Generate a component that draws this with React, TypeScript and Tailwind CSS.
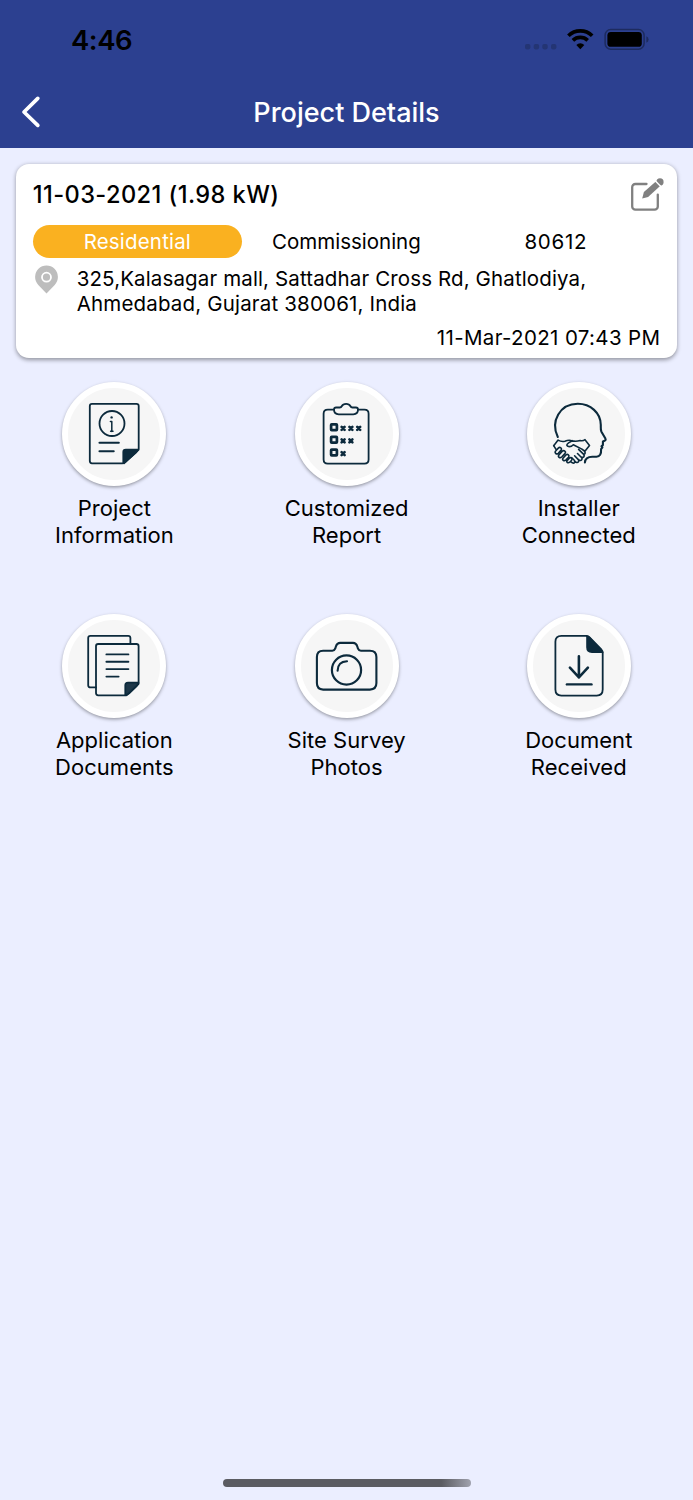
import type { ReactNode } from "react";

const INK = "#0c2a3c";

function StatusBar() {
  return (
    <div className="flex h-[80px] items-start justify-between pl-[71px] pr-[44px]">
      <span className="mt-[22px] text-[27.5px] leading-[36px] font-semibold tracking-[-0.45px] text-black">4:46</span>
      <svg className="mt-[26px]" width="126" height="28" viewBox="523 26 126 28">
        <g fill="#243574">
          <rect x="525" y="44" width="5.4" height="5.4" rx="1.8" />
          <rect x="533.7" y="44" width="5.4" height="5.4" rx="1.8" />
          <rect x="542.3" y="44" width="5.4" height="5.4" rx="1.8" />
          <rect x="551" y="44" width="5.4" height="5.4" rx="1.8" />
        </g>
        <g fill="none" stroke="#000" strokeWidth="3.7">
          <path d="M568.4 35.7a17 17 0 0 1 23.8 0" />
          <path d="M572.9 40.4a10.7 10.7 0 0 1 14.8 0" />
        </g>
        <path d="M576.3 44.9a5.9 5.9 0 0 1 8 0l-4 4.4z" fill="#000" />
        <rect x="605.1" y="29.6" width="39" height="19.6" rx="5.6" fill="none" stroke="#1d2b5f" strokeWidth="1.5" />
        <rect x="607.4" y="32" width="34.4" height="14.8" rx="3.4" fill="#000" />
        <path d="M646.4 36.2q2.2 1 2.2 3.3t-2.2 3.3z" fill="#1d2b5f" />
      </svg>
    </div>
  );
}

function Header() {
  return (
    <header className="h-[147.5px] bg-[#2c4090]">
      <StatusBar />
      <div className="grid h-[64px] grid-cols-[60px_1fr_60px] items-center">
        <svg className="ml-[20px]" width="22" height="34" viewBox="0 0 22 34">
          <path d="M17.8 3.4 4 17l13.8 13.4" fill="none" stroke="#fff" strokeWidth="3.7" strokeLinecap="round" strokeLinejoin="round" />
        </svg>
        <h1 className="pt-[2px] text-center text-[27px] leading-[34px] font-medium whitespace-nowrap text-white">Project Details</h1>
      </div>
    </header>
  );
}

function ProjectCard() {
  return (
    <section className="mx-[16.3px] mt-[16.5px] h-[194px] rounded-[13px] bg-white pt-[15.6px] pr-[16.3px] pl-[16.4px] shadow-[0_1.5px_4px_rgba(0,0,0,0.38)]">
      <div className="flex h-[45.6px] justify-between">
        <h2 className="pt-[0.6px] text-[23.6px] leading-[30px] font-medium tracking-[0.43px] whitespace-nowrap text-black">11-03-2021 (1.98 kW)</h2>
        <svg className="-mt-[1px] -mr-[4px] overflow-visible" width="35" height="35" viewBox="0 0 35 35">
          <path d="M17.5 5H6.4a3.2 3.2 0 0 0-3.2 3.2v19.2a3.2 3.2 0 0 0 3.2 3.2h19.2a3.2 3.2 0 0 0 3.2-3.2V15.6" fill="none" stroke="#808080" strokeWidth="2.3" strokeLinecap="round" />
          <path d="m13.2 19.4 1.7-6.3L26.8 2.5l4.3 4.5-12 11z" fill="#808080" />
          <circle cx="31" cy="2.9" r="3.6" fill="#808080" />
          <path d="m26.2 1.8 5.9 6" stroke="#fff" strokeWidth="1.4" />
        </svg>
      </div>
      <div className="flex h-[32.5px] text-[20.5px] leading-[33.6px] text-black">
        <span className="w-[209.3px] rounded-full bg-[#fab120] text-center tracking-[0.18px] text-white">Residential</span>
        <span className="ml-[30px] w-[252.5px] whitespace-nowrap">Commissioning</span>
        <span className="tracking-[0.7px]">80612</span>
      </div>
      <div className="mt-[8.6px] flex h-[50px] text-black">
        <svg className="ml-[2px] overflow-visible" width="24" height="28" viewBox="0 0 24 28">
          <path d="M11.5 27.5 3.3 18.9A11.4 11.4 0 1 1 19.7 18.9z" fill="#bdbdbd" />
          <circle cx="11.5" cy="11.2" r="4.5" fill="none" stroke="#fff" strokeWidth="1.8" />
        </svg>
        <p className="ml-[18px] text-[20.5px] leading-[25px] tracking-[0.13px] whitespace-nowrap">
          325,Kalasagar mall, Sattadhar Cross Rd, Ghatlodiya,
          <br />
          <span className="tracking-[0.17px]">Ahmedabad, Gujarat 380061, India</span>
        </p>
      </div>
      <p className="mt-[8.4px] text-right text-[20.5px] leading-[25px] tracking-[0.36px] text-black">11-Mar-2021 07:43 PM</p>
    </section>
  );
}

const informationIcon = (
  <>
    <path d="M60.5 81.3H30q-2.2 0-2.2-2.2V24q0-2.2 2.2-2.2h44.5q2.2 0 2.2 2.2v43.5L62 81.3" />
    <path d="M60.4 81.8V70q0-3.2 3.4-3.2h13q0 2.2-2 4.2L64 80.6q-1.6 1.4-3.6 1.2z" fill={INK} stroke="none" />
    <circle cx="50" cy="41.5" r="12.5" />
    <path d="M48.4 39.6h1.4v9.8M48.6 49.3h2.4" strokeWidth="1.5" />
    <circle cx="49.6" cy="35.4" r="1.2" fill={INK} stroke="none" />
    <path d="M37.5 60.8h19.3M37.5 69.2h14.2" strokeWidth="2.1" />
  </>
);

const reportRows = [
  { y: 45.2, marks: [48.7, 56.5, 64.3] },
  { y: 57.8, marks: [48.7, 56.5] },
  { y: 70.5, marks: [48.7] },
];

const reportIcon = (
  <g transform="translate(-0.7 0)">
    <path d="M39.7 27.6h-6.2q-4.2 0-4.2 4.2v45.6q0 4.2 4.2 4.2h36.6q4.2 0 4.2-4.2V31.8q0-4.2-4.2-4.2h-6.4" />
    <path d="M41.8 25.5h3.6q1.5 0 2.2-1.5 1-2.1 4.2-2.1t4.2 2.1q.7 1.5 2.2 1.5h3.4q2.1 0 2.1 2.1 0 4.7-4.7 4.7H44.4q-4.7 0-4.7-4.7 0-2.1 2.1-2.1z" />
    {reportRows.map((row) => (
      <g key={row.y}>
        <rect x="36.8" y={row.y - 2.9} width="5.8" height="5.8" rx="0.6" strokeWidth="2.7" />
        {row.marks.map((x) => (
          <path key={x} d={`M${x - 1.4} ${row.y - 0.4}l3 3m0-3l-3 3`} strokeWidth="2.6" />
        ))}
      </g>
    ))}
  </g>
);

const installerIcon = (
  <g transform="translate(-0.5 0)">
    <path
      d="M31.3 55C23.6 39.5 33.5 21.8 51.3 21.8 64 21.8 74.3 31 74.3 43c0 3.5-.2 4.6.5 6.4l4.1 7.2q.8 1.6-.8 2.2l-1.7.7v3.4l-1.4 1.4.9 1-1.3 1.8q.4 7.6-4.6 7.6h-4.2q-7 0-7.4 5.8"
      strokeWidth="2.1"
    />
    <g strokeWidth="1.6">
      <path d="m27.2 63.7 4.4-5.6q3.2 1.9 6.8 1.1 4.2-1.7 7.3-.3 4 .9 8-.4 2.7.7 4.8-.8l4.5 5.7-4.4 5.6q-1.7-.5-3.2-1.9l-8.6-4.4q-3 3.1-5.8 1.3-1.7-1 1.1-3.1l3.6-2.2" />
      <path d="m27.2 63.7 2.6 4.2M29.6 68.5l2.2-2.4c1.6-1.6 4.2.2 2.8 2l-2.8 3.2c-1.8 1.6-4.5-.5-2.2-2.8zM32.4 73l3.4-3.8c1.7-1.5 4.2.3 2.8 2.2L35.2 75c-1.8 1.5-4.4-.1-2.8-2zM36.5 76.2l2.9-3.2c1.7-1.4 4 .4 2.6 2.2l-2.7 2.9c-1.8 1.3-4.2-.2-2.8-1.9zM40.6 78.6l2.2-2.5c1.6-1.2 3.6.5 2.3 2.2l-1.8 1.9c-1.8 1.2-3.9 0-2.7-1.6z" />
      <path d="m44.5 79.8 1.4 1c1.8 1 3.5-.9 2.1-2.3l-2.7-2.8M48 79.2l1.6 1c2 .9 3.6-1 2.2-2.6l-3.7-3.8M51.8 77.4l1 .8c2 .9 3.7-1.1 2.2-2.7l-4-4M55 75.1c2 1 3.6-1 2.2-2.7l-5.1-5M57.2 72.6c1.7-.7 1.9-2 .7-3.3" />
    </g>
  </g>
);

const documentsIcon = (
  <>
    <path d="M34 73.4h-5.6q-2.2 0-2.2-2.2V24q0-2.2 2.2-2.2h37.8q2.2 0 2.2 2.2v5.6" />
    <path d="M63.3 81.3H36.2Q34 81.3 34 79.1V32.2q0-2.2 2.2-2.2h38.2q2.2 0 2.2 2.2v37.6L64.2 81.3" />
    <path d="M63.3 81V71.3q0-2.7 2.7-2.7h10.4q0 1.6-1.8 3.4l-7.2 7q-2.1 2-4.1 2z" fill="#1d3748" />
    <path d="M44.4 40.4h22M44.4 47.7h22M44.4 55.1h22M44.4 62.6h12.2" strokeWidth="1.9" />
  </>
);

const cameraIcon = (
  <g transform="translate(-0.5 0)">
    <path d="M28.6 36.7h9.2q2.1 0 2.9-2l.6-2q1.2-3.8 4.4-3.8h12.8q3.2 0 4.4 3.8l.6 2q.8 2 2.9 2h9q6.5 0 6.5 6.4v26q0 6.5-6.5 6.5H28.6q-6.2 0-6.2-6.5v-26q0-6.4 6.2-6.4z" strokeWidth="2.1" />
    <circle cx="52" cy="56" r="14.6" strokeWidth="2.2" />
    <path d="M43.1 56.7q0-9 9.4-9.5" strokeWidth="2.1" />
  </g>
);

const receivedIcon = (
  <g transform="translate(-0.4 0)">
    <path d="M59.7 21.8H34.8q-6 0-6 6v47.8q0 6 6 6h35.3q6 0 6-6V38.3L61.8 22.6z" />
    <path d="M59.6 21.3q2.4-.3 4 1.5l11.5 11.7q1.9 1.9 1.6 4.4H65.3q-5.7 0-5.7-5.7z" fill={INK} stroke="none" />
    <path d="M52.3 42.4v21M43.3 53.6l9 9.7 9-9.7" strokeWidth="2.6" />
    <path d="M40.3 70.4h24.6" strokeWidth="2.4" />
  </g>
);

type Action = { lines: [string, string]; icon: ReactNode };

const actions: Action[] = [
  { lines: ["Project", "Information"], icon: informationIcon },
  { lines: ["Customized", "Report"], icon: reportIcon },
  { lines: ["Installer", "Connected"], icon: installerIcon },
  { lines: ["Application", "Documents"], icon: documentsIcon },
  { lines: ["Site Survey", "Photos"], icon: cameraIcon },
  { lines: ["Document", "Received"], icon: receivedIcon },
];

function ActionTile({ lines, icon }: Action) {
  return (
    <button className="flex h-[231.5px] flex-col items-center">
      <span className="block size-[104px] shrink-0 rounded-full border-[6.4px] border-white bg-[#f6f6f6] shadow-[0_1.5px_3.5px_rgba(0,0,0,0.36)]">
        <svg className="-m-[6px]" width="104" height="104" viewBox="0 0 104 104" fill="none" stroke={INK} strokeWidth="1.8" strokeLinecap="round" strokeLinejoin="round">
          {icon}
        </svg>
      </span>
      <span className="mt-[8.7px] text-center text-[22px] leading-[27px] tracking-[0.03px] text-black">
        {lines[0]}
        <br />
        {lines[1]}
      </span>
    </button>
  );
}

export default function App() {
  return (
    <div className="flex h-[1500px] w-[693px] flex-col overflow-hidden bg-[#ebeeff] font-['Inter',sans-serif]">
      <Header />
      <ProjectCard />
      <main className="mt-[24.4px] -ml-[1.7px] grid grid-cols-[232.2px_232.2px_232.2px]">
        {actions.map((action) => (
          <ActionTile key={action.lines.join(" ")} {...action} />
        ))}
      </main>
      <div className="mt-auto mb-[13px] ml-[223px] h-[8.5px] w-[247.5px] rounded-full bg-linear-to-r from-[#5b5c62] from-88% to-[#a0a2ae]" />
    </div>
  );
}
